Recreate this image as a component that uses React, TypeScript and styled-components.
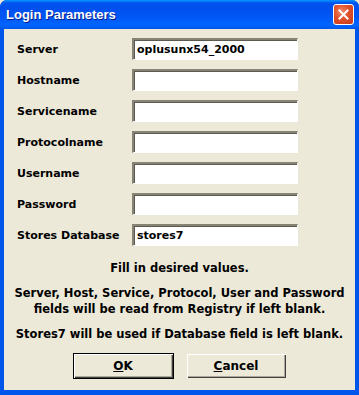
import React from "react";
import styled, { createGlobalStyle } from "styled-components";

const GlobalStyle = createGlobalStyle`
  html, body {
    margin: 0;
    padding: 0;
    background: #ece9d8;
  }
`;

const Window = styled.div`
  width: 359px;
  height: 395px;
  box-sizing: border-box;
  display: flex;
  flex-direction: column;
  background: #0055ea;
  border-radius: 7px 7px 0 0;
  overflow: hidden;
  font-family: "DejaVu Sans", Tahoma, sans-serif;
  font-size: 11px;
  font-weight: bold;
  color: #000;
`;

const TitleBar = styled.div`
  height: 29px;
  flex: none;
  display: flex;
  align-items: center;
  justify-content: space-between;
  padding: 0 5px 0 6px;
  background: linear-gradient(
    180deg,
    #0997ff 0px,
    #0053ee 3px,
    #0050ee 8px,
    #0058f6 18px,
    #0066ff 25px,
    #0055e8 29px
  );
`;

const Title = styled.span`
  color: #fff;
  font-family: "Liberation Sans", Arial, sans-serif;
  font-size: 13px;
  font-weight: bold;
  text-shadow: 1px 1px 0 #0a1e8c;
`;

const CloseButton = styled.div`
  width: 21px;
  height: 21px;
  box-sizing: border-box;
  border: 1px solid #fff;
  border-radius: 3px;
  background: radial-gradient(circle at 40% 35%, #f08a6a 0%, #e0502a 45%, #c5391a 100%);
  display: flex;
  align-items: center;
  justify-content: center;
`;

const Client = styled.div`
  flex: 1;
  margin: 0 4px 5px 4px;
  background: #ece9d8;
  display: flex;
  flex-direction: column;
  align-items: center;
  padding-top: 9px;
`;

const Form = styled.div`
  align-self: stretch;
  display: grid;
  grid-template-columns: 115px 166px;
  grid-auto-rows: 22px;
  row-gap: 9px;
  padding-left: 13px;
  align-items: center;
`;

const Label = styled.label`
  white-space: nowrap;
`;

const Field = styled.div`
  height: 22px;
  box-sizing: border-box;
  background: #fff;
  border-top: 2px solid #878475;
  border-left: 2px solid #878475;
  border-right: 1px solid #fff;
  border-bottom: 1px solid #fff;
  box-shadow: inset 1px 1px 0 #5c5a51;
  padding: 0 3px;
  display: flex;
  align-items: center;
`;

const Notes = styled.div`
  margin-top: 14px;
  display: flex;
  flex-direction: column;
  align-items: center;
  gap: 9px;
  text-align: center;
  line-height: 16px;
  font-size: 11.5px;
`;

const Buttons = styled.div`
  display: flex;
  gap: 12px;
  margin-top: 11px;
`;

const Button = styled.div<{ $default?: boolean }>`
  width: 101px;
  height: 26px;
  box-sizing: border-box;
  display: flex;
  align-items: center;
  justify-content: center;
  background: #ece9d8;
  border: 1px solid ${(p) => (p.$default ? "#000" : "#ece9d8")};
  box-shadow: inset 1px 1px 0 #fff, inset -1px -1px 0 #404040,
    inset -2px -2px 0 #aca899;
  font-size: 12px;

  u {
    text-decoration: underline;
  }
`;

const fields: { label: string; value: string }[] = [
  { label: "Server", value: "oplusunx54_2000" },
  { label: "Hostname", value: "" },
  { label: "Servicename", value: "" },
  { label: "Protocolname", value: "" },
  { label: "Username", value: "" },
  { label: "Password", value: "" },
  { label: "Stores Database", value: "stores7" },
];

const App: React.FC = () => {
  return (
    <>
      <GlobalStyle />
      <Window>
        <TitleBar>
          <Title>Login Parameters</Title>
          <CloseButton>
            <svg width="11" height="11" viewBox="0 0 11 11">
              <path d="M1.5 1.5 L9.5 9.5 M9.5 1.5 L1.5 9.5" stroke="#fff" strokeWidth="2" strokeLinecap="square" />
            </svg>
          </CloseButton>
        </TitleBar>
        <Client>
          <Form>
            {fields.map((f) => (
              <React.Fragment key={f.label}>
                <Label>{f.label}</Label>
                <Field>{f.value}</Field>
              </React.Fragment>
            ))}
          </Form>
          <Notes>
            <div>Fill in desired values.</div>
            <div>
              Server, Host, Service, Protocol, User and Password
              <br />
              fields will be read from Registry if left blank.
            </div>
            <div>Stores7 will be used if Database field is left blank.</div>
          </Notes>
          <Buttons>
            <Button $default>
              <span>
                <u>O</u>K
              </span>
            </Button>
            <Button>
              <span>
                <u>C</u>ancel
              </span>
            </Button>
          </Buttons>
        </Client>
      </Window>
    </>
  );
};

export default App;
